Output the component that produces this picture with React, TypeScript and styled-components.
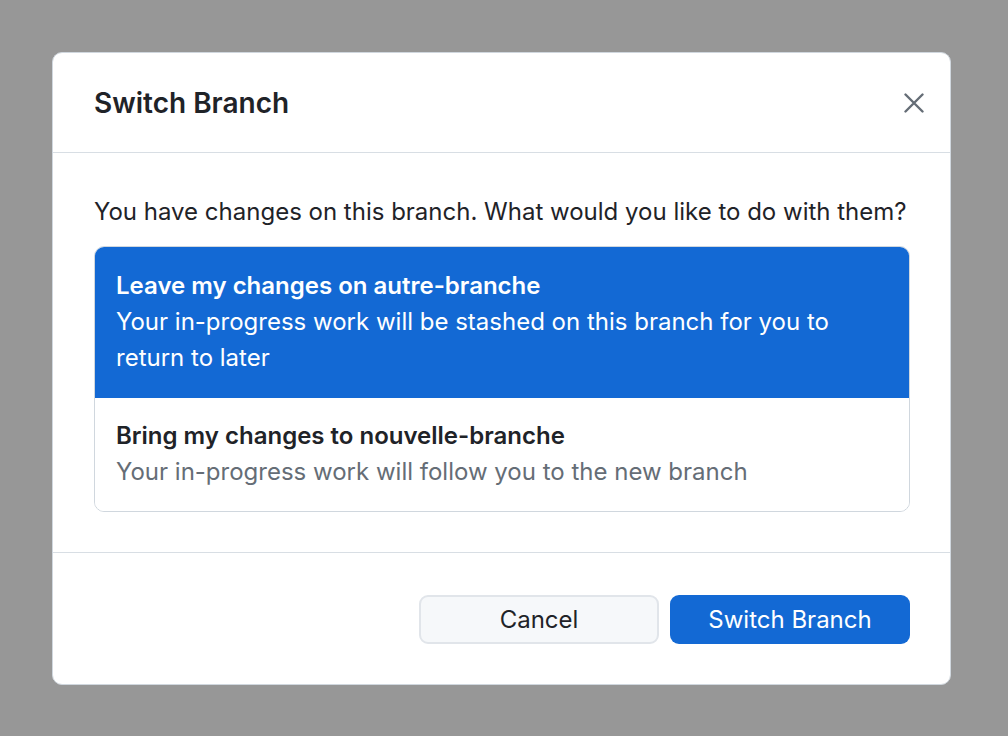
import React from "react";
import styled, { createGlobalStyle } from "styled-components";

const Global = createGlobalStyle`
  html, body { margin: 0; padding: 0; background: #979797; }
  body { font-family: Inter, "Noto Sans", sans-serif; color: #1f2328; }
  * { box-sizing: border-box; }
`;

const Page = styled.div`
  width: 1008px;
  height: 736px;
  padding: 52px 0 0 52px;
`;

const Dialog = styled.div`
  width: 899px;
  background: #ffffff;
  border: 1px solid #d0d7de;
  border-radius: 10px;
  overflow: hidden;
`;

const Header = styled.div`
  height: 100px;
  display: flex;
  align-items: center;
  justify-content: space-between;
  padding: 0 26px 0 41px;
  border-bottom: 1px solid #d8dee4;
`;

const Title = styled.h1`
  margin: 0;
  font-size: 28px;
  font-weight: 600;
  color: #1f2328;
`;

const CloseButton = styled.button`
  width: 20px;
  height: 20px;
  padding: 0;
  border: none;
  background: none;
  display: flex;
  align-items: center;
  justify-content: center;
  color: #656d76;
`;

const Body = styled.div`
  padding: 41px 40px 40px 41px;
  border-bottom: 1px solid #d8dee4;
`;

const Prompt = styled.p`
  margin: 0 0 16px 0;
  font-size: 24px;
  line-height: 36px;
  color: #1f2328;
`;

const OptionList = styled.div`
  border: 1px solid #d0d7de;
  border-radius: 10px;
  overflow: hidden;
`;

const Option = styled.div<{ $selected?: boolean }>`
  padding: ${(p) => (p.$selected ? "22px 22px 22px" : "20px 21px 21px")};
  margin: ${(p) => (p.$selected ? "-1px -1px 0" : "0")};
  background: ${(p) => (p.$selected ? "#1369d4" : "#ffffff")};
  font-size: 24px;
  line-height: 36px;
`;

const OptionTitle = styled.div<{ $selected?: boolean }>`
  font-weight: 600;
  color: ${(p) => (p.$selected ? "#ffffff" : "#1f2328")};
`;

const OptionDesc = styled.div<{ $selected?: boolean }>`
  color: ${(p) => (p.$selected ? "#ffffff" : "#656d76")};
`;

const Footer = styled.div`
  display: flex;
  justify-content: flex-end;
  gap: 11px;
  padding: 42px 40px 40px;
`;

const Button = styled.button<{ $primary?: boolean }>`
  width: 240px;
  height: 49px;
  border-radius: 9px;
  font-family: Inter, "Noto Sans", sans-serif;
  font-size: 24px;
  font-weight: 400;
  border: ${(p) => (p.$primary ? "none" : "2px solid #e1e5ea")};
  background: ${(p) => (p.$primary ? "#1369d4" : "#f6f8fa")};
  color: ${(p) => (p.$primary ? "#ffffff" : "#1f2328")};
`;

export default function App() {
  return (
    <Page>
      <Global />
      <Dialog>
        <Header>
          <Title>Switch Branch</Title>
          <CloseButton aria-label="Close">
            <svg width="20" height="20" viewBox="0 0 20 20">
              <path d="M1.5 1.5 L18.5 18.5 M18.5 1.5 L1.5 18.5" stroke="currentColor" strokeWidth="2.4" strokeLinecap="round" />
            </svg>
          </CloseButton>
        </Header>
        <Body>
          <Prompt>You have changes on this branch. What would you like to do with them?</Prompt>
          <OptionList>
            <Option $selected>
              <OptionTitle $selected>Leave my changes on autre-branche</OptionTitle>
              <OptionDesc $selected>
                Your in-progress work will be stashed on this branch for you to return to later
              </OptionDesc>
            </Option>
            <Option>
              <OptionTitle>Bring my changes to nouvelle-branche</OptionTitle>
              <OptionDesc>Your in-progress work will follow you to the new branch</OptionDesc>
            </Option>
          </OptionList>
        </Body>
        <Footer>
          <Button>Cancel</Button>
          <Button $primary>Switch Branch</Button>
        </Footer>
      </Dialog>
    </Page>
  );
}
